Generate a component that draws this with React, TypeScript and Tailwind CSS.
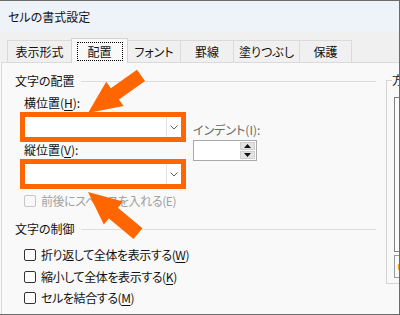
import React from "react";

function Heading({ children }: { children: React.ReactNode }) {
  return (
    <div className="flex items-center h-[16px]">
      <span>{children}</span>
      <div className="flex-1 h-px bg-[#dcdcdc] ml-[6px]" />
    </div>
  );
}

function Combo({ className = "" }: { className?: string }) {
  return (
    <div className={"w-[166px] h-[30px] ml-[5px] border-[5px] border-[#ff6600] bg-white flex " + className}>
      <div className="flex-1" />
      <div className="w-[15px] border-l border-[#e3e3e3] flex items-center justify-center">
        <svg width="8" height="5" viewBox="0 0 8 5">
          <polyline points="0.5,0.5 4,4 7.5,0.5" fill="none" stroke="#606060" strokeWidth="1" />
        </svg>
      </div>
    </div>
  );
}

function Check({ disabled = false, children, className = "" }: { disabled?: boolean; children: React.ReactNode; className?: string }) {
  return (
    <div className={"flex items-center h-[16px] pl-[9px] " + className}>
      <div className={"w-[12px] h-[12px] rounded-[2px] border " + (disabled ? "border-[#c6c6c6] bg-[#f9f9f9]" : "border-[#333333] bg-white")} />
      <span className={"ml-[5px] tracking-[-0.4px] " + (disabled ? "text-[#a0a0a0]" : "")}>{children}</span>
    </div>
  );
}

const tabs = [
  { label: "表示形式", w: "w-[65px]" },
  { label: "配置", w: "w-[57px]", active: true },
  { label: "フォント", w: "w-[54px]" },
  { label: "罫線", w: "w-[54px]" },
  { label: "塗りつぶし", w: "w-[67px]" },
  { label: "保護", w: "w-[53px]" },
];

export default function App() {
  return (
    <div className="relative w-[400px] h-[315px] overflow-hidden bg-[#f9f9f9] border-t border-r border-b border-[#6b6b6b] flex flex-col font-['Noto_Sans_CJK_JP','Noto_Sans',sans-serif] [font-feature-settings:'palt'] text-[12px] leading-[16px] text-[#111111]">
      <div className="h-[31px] shrink-0 bg-[#eef2f9] flex items-center pl-[8px]">セルの書式設定</div>
      <div className="h-[30px] shrink-0 bg-[#f0f0f0] flex items-end pl-[7px] relative z-10">
        {tabs.map((t) =>
          t.active ? (
            <div
              key={t.label}
              className={t.w + " -ml-px h-[25px] -mb-px bg-[#f9f9f9] border-t border-l border-r border-[#d3d3d3] flex justify-center pt-[3px] relative z-10"}
            >
              <div className="w-[46px] h-[19px] border border-dotted border-black flex items-center justify-center">
                {t.label}
              </div>
            </div>
          ) : (
            <div
              key={t.label}
              className={t.w + " -ml-px first:ml-0 h-[22px] bg-[#f0f0f0] border-t border-l border-r border-[#dadada] flex items-center justify-center"}
            >
              {t.label}
            </div>
          )
        )}
      </div>
      <div className="flex-1 ml-[1px] border-l border-t border-[#dadada] bg-[#f9f9f9] flex pl-[13px] pt-[10px]">
        <div className="w-[361px] shrink-0 flex flex-col">
          <Heading>文字の配置</Heading>
          <div className="flex mt-[6px]">
            <div className="flex flex-col">
              <div className="pl-[9px] h-[16px]">
                横位置(<span className="underline underline-offset-2">H</span>):
              </div>
              <Combo className="mt-[1px]" />
              <div className="pl-[9px] h-[16px] mt-[0px]">
                縦位置(<span className="underline underline-offset-2">V</span>):
              </div>
              <Combo className="mt-[1px]" />
            </div>
            <div className="ml-[7px] pt-[27px] flex flex-col">
              <div className="h-[16px] text-[#6a6a6a]">インデント(I):</div>
              <div className="mt-[2px] w-[64px] h-[21px] border border-[#a8a8a8] bg-white flex justify-end p-[1px]">
                <div className="w-[15px] flex flex-col gap-[1px]">
                  <div className="flex-1 bg-[#e3e3e3] border border-[#cfcfcf] flex items-center justify-center">
                    <svg width="7" height="4" viewBox="0 0 7 4">
                      <polygon points="3.5,0 7,4 0,4" fill="#111" />
                    </svg>
                  </div>
                  <div className="flex-1 bg-[#e3e3e3] border border-[#cfcfcf] flex items-center justify-center">
                    <svg width="7" height="4" viewBox="0 0 7 4">
                      <polygon points="0,0 7,0 3.5,4" fill="#111" />
                    </svg>
                  </div>
                </div>
              </div>
            </div>
          </div>
          <Check disabled className="mt-[4px]">前後にスペースを入れる(E)</Check>
          <div className="mt-[12px]">
            <Heading>文字の制御</Heading>
          </div>
          <Check className="mt-[10px]">
            折り返して全体を表示する(<span className="underline underline-offset-2">W</span>)
          </Check>
          <Check className="mt-[6px]">
            縮小して全体を表示する(<span className="underline underline-offset-2">K</span>)
          </Check>
          <Check className="mt-[5px]">
            セルを結合する(<span className="underline underline-offset-2">M</span>)
          </Check>
        </div>
        <fieldset className="ml-[10px] -mt-[1px] self-start shrink-0 w-[120px] h-[212px] border border-[#d5d5d5] pl-[7px] pt-[9px]">
          <legend className="-ml-[2px] leading-[16px]">方向</legend>
          <div className="h-[155px] border border-[#808080] bg-[#fbfbfb]" />
          <div className="mt-[3px] h-[23px] border border-[#9a9a9a] flex items-center pl-[3px]">
            <div className="w-[2px] h-[6px] bg-[#f5a623]" />
          </div>
        </fieldset>
      </div>
      <svg className="absolute inset-0 pointer-events-none" width="400" height="315" viewBox="0 0 400 315">
        <polygon
          points="0,0 33,-15 33,-7 65,-7 65,7 33,7 33,15"
          fill="#ff6600"
          transform="translate(88 112) rotate(-35.4)"
        />
        <polygon
          points="0,0 33,-15 33,-7 65,-7 65,7 33,7 33,15"
          fill="#ff6600"
          transform="translate(88 191) rotate(39.7)"
        />
      </svg>
    </div>
  );
}
